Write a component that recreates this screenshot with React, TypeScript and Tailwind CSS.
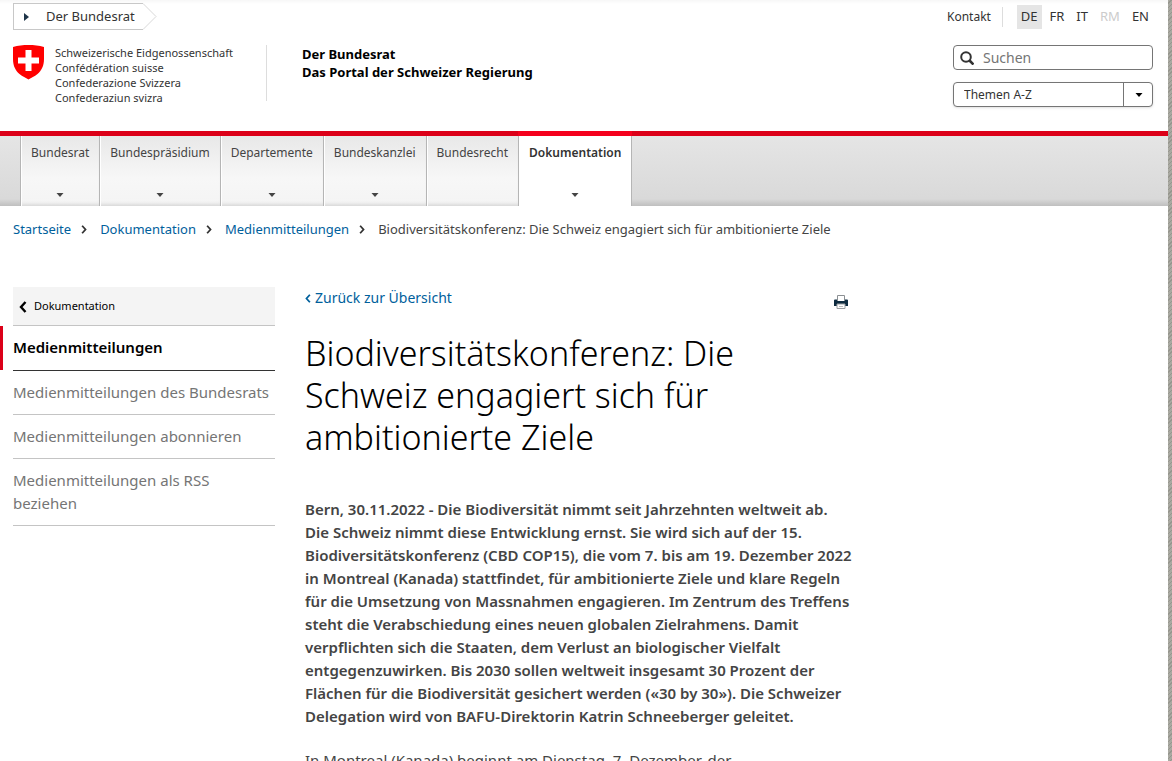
import type { ReactNode } from "react";

type NavItem = {
  label: string;
  hasMenu: boolean;
  active?: boolean;
};

const NAV: NavItem[] = [
  { label: "Bundesrat", hasMenu: true },
  { label: "Bundespräsidium", hasMenu: true },
  { label: "Departemente", hasMenu: true },
  { label: "Bundeskanzlei", hasMenu: true },
  { label: "Bundesrecht", hasMenu: false },
  { label: "Dokumentation", hasMenu: true, active: true },
];

const LANGS = ["DE", "FR", "IT", "RM", "EN"];

const CRUMBS = ["Startseite", "Dokumentation", "Medienmitteilungen"];

const SIDE_LINKS = [
  "Medienmitteilungen des Bundesrats",
  "Medienmitteilungen abonnieren",
  "Medienmitteilungen als RSS beziehen",
];

const LEAD = [
  "Bern, 30.11.2022 - Die Biodiversität nimmt seit Jahrzehnten weltweit ab.",
  "Die Schweiz nimmt diese Entwicklung ernst. Sie wird sich auf der 15.",
  "Biodiversitätskonferenz (CBD COP15), die vom 7. bis am 19. Dezember 2022",
  "in Montreal (Kanada) stattfindet, für ambitionierte Ziele und klare Regeln",
  "für die Umsetzung von Massnahmen engagieren. Im Zentrum des Treffens",
  "steht die Verabschiedung eines neuen globalen Zielrahmens. Damit",
  "verpflichten sich die Staaten, dem Verlust an biologischer Vielfalt",
  "entgegenzuwirken. Bis 2030 sollen weltweit insgesamt 30 Prozent der",
  "Flächen für die Biodiversität gesichert werden («30 by 30»). Die Schweizer",
  "Delegation wird von BAFU-Direktorin Katrin Schneeberger geleitet.",
];

function Caret({ className }: { className: string }) {
  return (
    <svg viewBox="0 0 8 4" className={`h-1 w-2 ${className}`} aria-hidden="true">
      <path d="M0.5 0h7L4 4z" fill="currentColor" />
    </svg>
  );
}

function Chevron({ left, className }: { left?: boolean; className: string }) {
  return (
    <svg viewBox="0 0 8 12" className={className} fill="none" stroke="currentColor" strokeWidth="2.4" aria-hidden="true">
      <path d={left ? "M6.5 1L2 6l4.500 5" : "M1.500 1L6 6l-4.500 5"} />
    </svg>
  );
}

function Shield() {
  return (
    <svg viewBox="0 0 31 35" className="h-[35px] w-[31px] shrink-0" aria-hidden="true">
      <path
        d="M0 2C5 .6 10 0 15.500 0S26 .6 31 2v12c0 7-2.500 11.500-6.500 15-3 2.600-6.300 3.800-9 5.500-2.700-1.700-6-2.900-9-5.500C2.500 25.500 0 21 0 14z"
        fill="#f00"
      />
      <path d="M12.500 5h6v7.500H26v6h-7.500V26h-6v-7.500H5v-6h7.500z" fill="#fff" />
    </svg>
  );
}

function Printer() {
  return (
    <svg viewBox="0 0 14 14" className="h-3.5 w-3.5" aria-hidden="true">
      <path d="M3.500 6V.5h7V6" fill="#fff" stroke="#8b8f92" />
      <path d="M0 5.500a1 1 0 0 1 1-1h2v1.500h8V4.500h2a1 1 0 0 1 1 1V11H0z" fill="#0d2b40" />
      <path d="M3 9h8v4.500H3z" fill="#fff" stroke="#9a9ea1" />
      <path d="M5 11.500h4" stroke="#bbb" />
    </svg>
  );
}

function SideItem({ children }: { children: ReactNode }) {
  return (
    <li className="border-b border-[#c4c4c4] py-2.5">
      <a href="#" className="block text-[15px] leading-[23px] text-[#757575]">
        {children}
      </a>
    </li>
  );
}

function Header() {
  return (
    <header className="flex min-h-[131px] items-start justify-between bg-gradient-to-b from-[#f7f7f7] to-white to-[4px] pr-[15px] pl-[13px]">
      <div className="pt-[3px]">
        <a href="#" className="flex h-[27px] w-fit items-stretch text-[13px] text-[#333]">
          <span className="flex items-center gap-[17px] border border-r-0 border-[#c8c8c8] pr-2 pl-[10px]">
            <svg viewBox="0 0 5 8" className="h-2 w-[5px] text-[#1f3549]" aria-hidden="true">
              <path d="M0 0l5 4-5 4z" fill="currentColor" />
            </svg>
            Der Bundesrat
          </span>
          <svg viewBox="0 0 14 27" className="h-[27px] w-3.5" fill="none" stroke="#d8d8d8" aria-hidden="true">
            <path d="M0 .5L13 13.500 0 26.500" />
          </svg>
        </a>
        <div className="mt-[15px] flex items-start">
          <a href="#" className="flex h-14 w-[254px] gap-[11px] border-r border-[#ddd]">
            <Shield />
            <span className="text-[11px] leading-[15px] whitespace-nowrap text-[#333]">
              Schweizerische Eidgenossenschaft
              <br />
              Confédération suisse
              <br />
              Confederazione Svizzera
              <br />
              Confederaziun svizra
            </span>
          </a>
          <p className="pl-[35px] text-[13px] leading-[18px] font-bold text-black">
            Der Bundesrat
            <br />
            Das Portal der Schweizer Regierung
          </p>
        </div>
      </div>

      <div className="w-[206px] pt-[5px]">
        <div className="flex items-center justify-between">
          <a href="#" className="text-[12px] text-[#333]">
            Kontakt
          </a>
          <nav aria-label="Sprache" className="flex h-6 items-center gap-1">
            <span className="mr-[10px] h-5 border-l border-[#ddd]" />
            {LANGS.map((lang) => (
              <a
                key={lang}
                href="#"
                className={`flex h-6 items-center px-1 text-[13px] ${
                  lang === "DE"
                    ? "bg-[#e5e5e5] text-[#333]"
                    : lang === "RM"
                      ? "text-[#ccc]"
                      : "text-[#333]"
                }`}
              >
                {lang}
              </a>
            ))}
          </nav>
        </div>
        <label className="mt-4 ml-[6px] flex h-[25px] items-center gap-[9px] rounded border border-[#757575] bg-white pl-[6px]">
          <svg viewBox="0 0 14 14" className="h-3.5 w-3.5 shrink-0 text-[#333]" fill="none" stroke="currentColor" aria-hidden="true">
            <circle cx="6" cy="6" r="4.800" strokeWidth="2" />
            <path d="M9.500 9.500l4 4" strokeWidth="2.600" />
          </svg>
          <input
            type="search"
            aria-label="Suchen"
            placeholder="Suchen"
            className="w-full min-w-0 text-[14px] outline-none placeholder:text-[#757575]"
          />
        </label>
        <div className="relative mt-3 ml-[6px]">
          <select
            aria-label="Themen A-Z"
            className="block h-[25px] w-full appearance-none rounded border border-[#757575] bg-white pl-[10px] text-[12px] text-[#333] shadow-sm"
          >
            <option>Themen A-Z</option>
          </select>
          <span className="pointer-events-none absolute inset-y-0 right-0 flex w-[30px] items-center justify-center border-l border-[#757575]">
            <Caret className="text-black" />
          </span>
        </div>
      </div>
    </header>
  );
}

function MainNav() {
  return (
    <nav
      aria-label="Hauptnavigation"
      className="border-t-[5px] border-[#dc0018] bg-gradient-to-b from-[#e5e5e5] from-0% via-[#d9d9d9] via-90% to-[#bfbfbf] pl-5"
    >
      <ul className="flex h-[70px]">
        {NAV.map((item) => (
          <li
            key={item.label}
            className={`flex ${item.active ? "-mt-[5px] border-t-[5px] border-[#f5001d]" : ""}`}
          >
            <a
              href="#"
              className={`flex flex-col items-center justify-between border-l border-[#b5b5b5] px-[10px] pt-2 pb-[9px] text-[12px] leading-[18px] ${
                item.active
                  ? "border-r bg-white font-semibold text-[#333]"
                  : "bg-gradient-to-b from-[#e8e8e8] from-0% via-[#f7f7f7] via-60% to-[#f4f4f4] text-[#444] shadow-[inset_1px_0_0_#fff,inset_0_-4px_4px_-3px_#ccc]"
              }`}
            >
              {item.label}
              {item.hasMenu && <Caret className="text-[#444]" />}
            </a>
          </li>
        ))}
      </ul>
    </nav>
  );
}

function Breadcrumb() {
  return (
    <nav aria-label="Breadcrumb" className="px-[13px] pt-[14px]">
      <ol className="flex text-[13px] leading-[19px] whitespace-nowrap">
        {CRUMBS.map((crumb) => (
          <li key={crumb} className="flex items-center">
            <a href="#" className="text-[#00609c]">
              {crumb}
            </a>
            <Chevron className="mr-[13px] ml-[10px] h-[9px] w-[6px] text-[#333]" />
          </li>
        ))}
        <li className="text-[#444]">
          Biodiversitätskonferenz: Die Schweiz engagiert sich für ambitionierte Ziele
        </li>
      </ol>
    </nav>
  );
}

function Sidebar() {
  return (
    <aside className="w-[275px] shrink-0">
      <a
        href="#"
        className="ml-[13px] flex h-[39px] items-center gap-[7px] border-b border-[#c4c4c4] bg-[#f4f4f4] pt-px pl-[6px] text-[11px] text-black"
      >
        <Chevron left className="h-3 w-2" />
        Dokumentation
      </a>
      <div className="flex">
        <span className="h-11 w-[3px] bg-[#dc0018]" />
        <a
          href="#"
          className="ml-[10px] flex-1 border-b border-[#333] pt-2.5 pb-[11px] text-[15px] leading-[23px] font-semibold text-black"
        >
          Medienmitteilungen
        </a>
      </div>
      <ul className="ml-[13px]">
        {SIDE_LINKS.map((label) => (
          <SideItem key={label}>{label}</SideItem>
        ))}
      </ul>
    </aside>
  );
}

function Article() {
  return (
    <main className="ml-[30px] w-[560px]">
      <div className="flex items-start justify-between pr-[17px]">
        <a href="#" className="flex items-center gap-1 text-[14px] leading-[22px] text-[#00609c]">
          <Chevron left className="h-[9px] w-[6px]" />
          Zurück zur Übersicht
        </a>
        <button type="button" aria-label="Drucken" className="mt-2">
          <Printer />
        </button>
      </div>
      <h1 className="mt-[23px] text-[34px] leading-[42px] font-light text-black">
        Biodiversitätskonferenz: Die
        <br />
        Schweiz engagiert sich für
        <br />
        ambitionierte Ziele
      </h1>
      <p className="mt-10 text-[15px] leading-[23px] font-semibold whitespace-nowrap text-[#444]">
        {LEAD.map((line) => (
          <span key={line} className="block">
            {line}
          </span>
        ))}
      </p>
      <p className="mt-[21px] text-[15px] leading-[23px] text-[#444]">
        In Montreal (Kanada) beginnt am Dienstag, 7. Dezember, der
      </p>
    </main>
  );
}

export default function App() {
  return (
    <div className="flex h-screen overflow-hidden bg-white font-['Noto_Sans','Open_Sans',sans-serif]">
      <div className="min-w-0 flex-1">
        <Header />
        <MainNav />
        <Breadcrumb />
        <div className="mt-12 flex items-start">
          <Sidebar />
          <Article />
        </div>
      </div>
      <div className="w-1 bg-[repeating-linear-gradient(135deg,#a9a9a1_0px,#a9a9a1_2px,#96968e_2px,#96968e_3px)]" />
    </div>
  );
}
